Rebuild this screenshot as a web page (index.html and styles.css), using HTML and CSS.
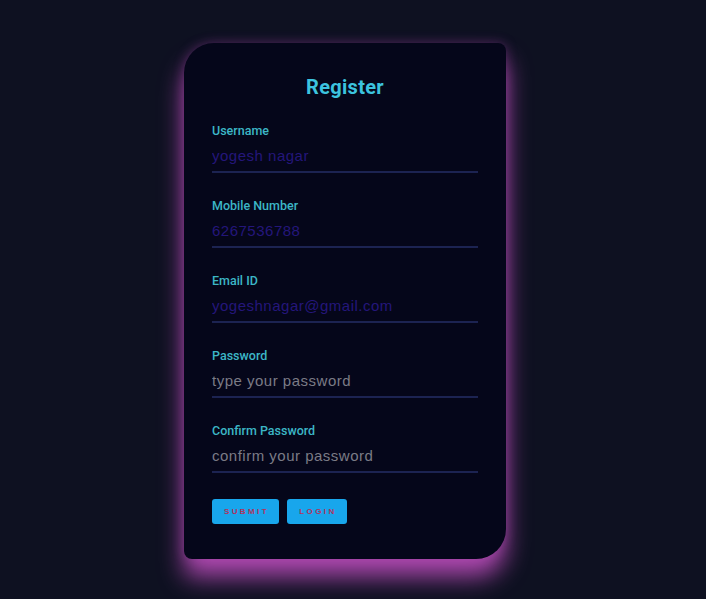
FILE: index.html
```html
<!DOCTYPE html>
<html>
<head>
<meta charset="utf-8">
<link rel="stylesheet" href="styles.css">
</head>
<body>
<main class="stage">
  <form class="card">
    <h1 class="title">Register</h1>
    <div class="field">
      <label class="label">Username</label>
      <input class="input filled" type="text" value="yogesh nagar">
    </div>
    <div class="field">
      <label class="label">Mobile Number</label>
      <input class="input filled" type="text" value="6267536788">
    </div>
    <div class="field">
      <label class="label">Email ID</label>
      <input class="input filled" type="text" value="yogeshnagar@gmail.com">
    </div>
    <div class="field">
      <label class="label">Password</label>
      <input class="input" type="text" placeholder="type your password">
    </div>
    <div class="field">
      <label class="label">Confirm Password</label>
      <input class="input" type="text" placeholder="confirm your password">
    </div>
    <div class="actions">
      <button type="button" class="btn btn-submit">SUBMIT</button>
      <button type="button" class="btn btn-login">LOGIN</button>
    </div>
  </form>
</main>
</body>
</html>
```
FILE: styles.css
```css
html, body {
  margin: 0;
  padding: 0;
  background: #0e1121;
  height: 100%;
  overflow: hidden;
}
.stage {
  padding: 43px 0 0 184px;
}
.card {
  box-sizing: border-box;
  width: 322px;
  height: 516px;
  background: #05061a;
  border-radius: 30px 8px 30px 8px;
  padding: 32px 28px 0 28px;
  box-shadow: 0 18px 24px rgba(186, 76, 186, 0.9), 0 0 12px rgba(150, 60, 160, 0.4);
  font-family: "Liberation Sans", Arial, sans-serif;
}
.title {
  margin: 0;
  text-align: center;
  font-family: Roboto, "Liberation Sans", sans-serif;
  font-weight: 700;
  font-size: 20px;
  line-height: 24px;
  color: #3cc3df;
  letter-spacing: 0.3px;
}
.field {
  margin-top: 25px;
  display: flex;
  flex-direction: column;
}
.field:first-of-type {
  margin-top: 24px;
}
.label {
  font-family: Roboto, "Liberation Sans", sans-serif;
  font-weight: 500;
  font-size: 12.5px;
  line-height: 16px;
  color: #3cb6c6;
}
.input {
  box-sizing: border-box;
  width: 266px;
  height: 34px;
  padding: 1px 0 0 0;
  margin: 0;
  border: none;
  border-bottom: 2px solid #1c2352;
  background: transparent;
  font-family: "Liberation Sans", Arial, sans-serif;
  font-size: 15px;
  letter-spacing: 0.5px;
  color: #7b7b86;
  outline: none;
}
.input::placeholder {
  color: #7b7b86;
}
.input.filled {
  color: #24167a;
}
.actions {
  margin-top: 26px;
  display: flex;
  gap: 8px;
}
.btn {
  height: 25px;
  border: none;
  border-radius: 3px;
  background: #18a6ec;
  color: #b2325e;
  font-family: "Liberation Sans", Arial, sans-serif;
  font-weight: 700;
  font-size: 8px;
  letter-spacing: 2.4px;
  padding: 0 0 0 2px;
}
.btn-submit { width: 67px; }
.btn-login { width: 60px; }
```
